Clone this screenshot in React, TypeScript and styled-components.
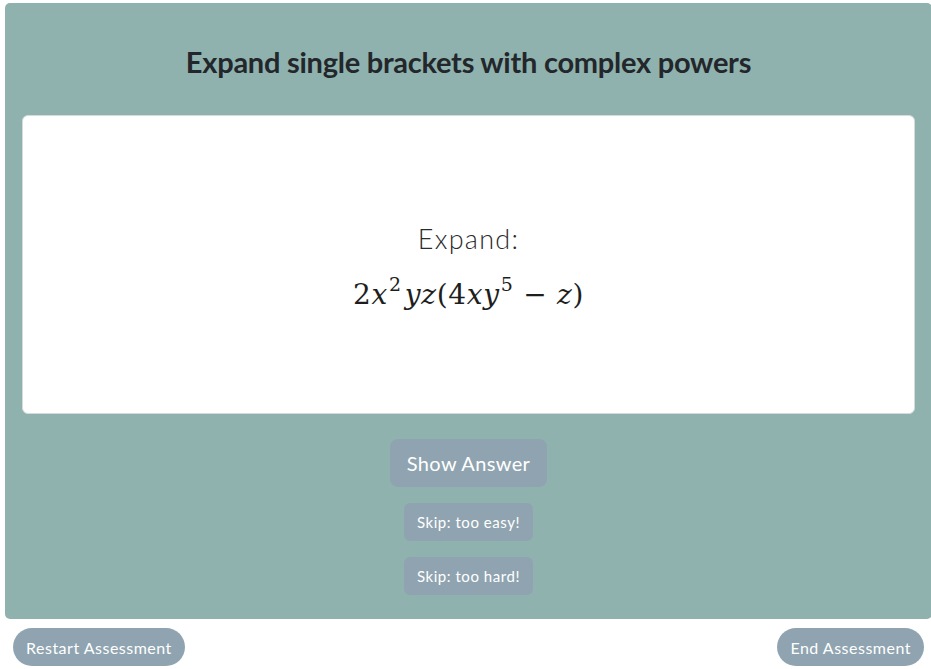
import React from "react";
import styled, { createGlobalStyle } from "styled-components";

const Global = createGlobalStyle`
  html, body { margin: 0; padding: 0; background: #ffffff; overflow: hidden; }
  body { font-family: Lato, "Open Sans", sans-serif; }
`;

const Page = styled.div`
  width: 931px;
  padding: 3px 0 0 5px;
  box-sizing: border-box;
`;

const Panel = styled.section`
  width: 927px;
  box-sizing: border-box;
  background: #8fb2ae;
  border-radius: 5px;
  padding: 0 17px 24px 17px;
  display: flex;
  flex-direction: column;
  align-items: center;
`;

const Title = styled.h1`
  margin: 0;
  height: 112px;
  display: flex;
  align-items: center;
  padding-top: 4px;
  box-sizing: border-box;
  font-family: Lato, sans-serif;
  font-weight: 700;
  font-size: 29px;
  letter-spacing: -0.25px;
  color: #23272b;
`;

const Card = styled.div`
  width: 100%;
  height: 299px;
  box-sizing: border-box;
  background: #ffffff;
  border: 1px solid #d4dcdb;
  border-radius: 6px;
  display: flex;
  flex-direction: column;
  align-items: center;
  justify-content: center;
  padding-top: 6px;
`;

const Prompt = styled.div`
  font-family: Lato, sans-serif;
  font-weight: 300;
  font-size: 27px;
  letter-spacing: 1.3px;
  color: #2b2b2b;
  line-height: 32px;
`;

const MathLine = styled.div`
  font-family: "DejaVu Serif", "Liberation Serif", serif;
  font-size: 28px;
  color: #1e1e1e;
  margin-top: 22px;
  line-height: 36px;
  letter-spacing: 0.7px;
  i { font-style: italic; }
`;

const Sup = styled.sup<{ $gap?: number }>`
  font-size: 19px;
  vertical-align: 13px;
  line-height: 0;
  font-style: normal;
  padding: 0 ${(p) => p.$gap ?? 0}px 0 1px;
`;

const Actions = styled.div`
  display: flex;
  flex-direction: column;
  align-items: center;
  gap: 16px;
  margin-top: 25px;
`;

const Button = styled.button<{ $big?: boolean }>`
  border: none;
  background: #8fa4b0;
  color: #ffffff;
  font-family: Lato, sans-serif;
  font-weight: 400;
  font-size: ${(p) => (p.$big ? "20px" : "15px")};
  letter-spacing: ${(p) => (p.$big ? "0.35px" : "0.55px")};
  height: ${(p) => (p.$big ? "48px" : "38px")};
  padding: ${(p) => (p.$big ? "0 17px" : "0 13px")};
  border-radius: ${(p) => (p.$big ? "8px" : "6px")};
  cursor: pointer;
`;

const Footer = styled.div`
  display: flex;
  justify-content: space-between;
  margin-top: 9px;
  padding: 0 7px 0 8px;
`;

const Pill = styled.button`
  border: none;
  background: #8fa4b0;
  color: #ffffff;
  font-family: Lato, sans-serif;
  font-size: 16px;
  letter-spacing: 0.5px;
  height: 38px;
  padding: 0 13px;
  border-radius: 19px;
  cursor: pointer;
`;

export default function App() {
  return (
    <>
      <Global />
      <Page>
        <Panel>
          <Title>Expand single brackets with complex powers</Title>
          <Card>
            <Prompt>Expand:</Prompt>
            <MathLine>
              2<i>x</i><Sup $gap={3}>2</Sup><i>yz</i>(4<i>xy</i><Sup>5</Sup> − <i>z</i>)
            </MathLine>
          </Card>
          <Actions>
            <Button $big>Show Answer</Button>
            <Button>Skip: too easy!</Button>
            <Button>Skip: too hard!</Button>
          </Actions>
        </Panel>
        <Footer>
          <Pill>Restart Assessment</Pill>
          <Pill>End Assessment</Pill>
        </Footer>
      </Page>
    </>
  );
}
